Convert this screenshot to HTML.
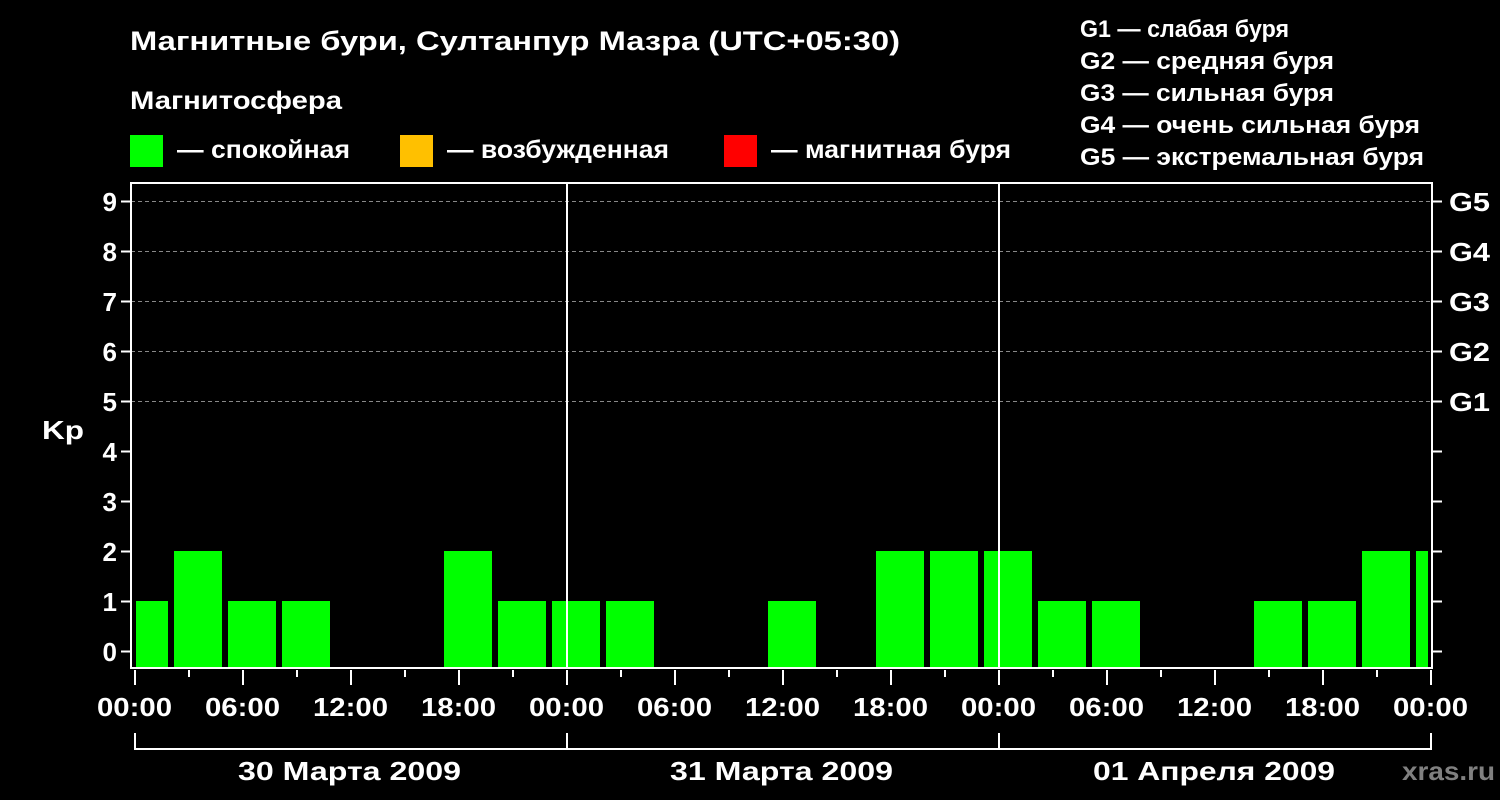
<!DOCTYPE html>
<html><head><meta charset="utf-8"><style>
html,body{margin:0;padding:0;background:#000;width:1500px;height:800px;overflow:hidden}
svg{display:block}
text{font-family:"Liberation Sans",sans-serif;font-weight:bold;fill:#fff}
</style></head><body>
<svg width="1500" height="800" viewBox="0 0 1500 800">
<text x="130" y="50" font-size="27" textLength="770" lengthAdjust="spacingAndGlyphs">Магнитные бури, Султанпур Мазра (UTC+05:30)</text>
<text x="130" y="109" font-size="25" textLength="212" lengthAdjust="spacingAndGlyphs">Магнитосфера</text>
<rect x="130" y="135" width="33" height="32" fill="#00ff00"/>
<text x="177" y="158" font-size="25" textLength="173" lengthAdjust="spacingAndGlyphs">— спокойная</text>
<rect x="400" y="135" width="33" height="32" fill="#ffc000"/>
<text x="447" y="158" font-size="25" textLength="222" lengthAdjust="spacingAndGlyphs">— возбужденная</text>
<rect x="724" y="135" width="33" height="32" fill="#ff0000"/>
<text x="771" y="158" font-size="25" textLength="240" lengthAdjust="spacingAndGlyphs">— магнитная буря</text>
<g font-size="24">
<text x="1080" y="37" textLength="209" lengthAdjust="spacingAndGlyphs">G1 — слабая буря</text>
<text x="1080" y="69" textLength="254" lengthAdjust="spacingAndGlyphs">G2 — средняя буря</text>
<text x="1080" y="101" textLength="254" lengthAdjust="spacingAndGlyphs">G3 — сильная буря</text>
<text x="1080" y="133" textLength="340" lengthAdjust="spacingAndGlyphs">G4 — очень сильная буря</text>
<text x="1080" y="165" textLength="344" lengthAdjust="spacingAndGlyphs">G5 — экстремальная буря</text>
</g>
<g stroke="#888" stroke-width="1" stroke-dasharray="4,3">
<line x1="131" x2="1432" y1="201.5" y2="201.5"/>
<line x1="131" x2="1432" y1="251.5" y2="251.5"/>
<line x1="131" x2="1432" y1="301.5" y2="301.5"/>
<line x1="131" x2="1432" y1="351.5" y2="351.5"/>
<line x1="131" x2="1432" y1="401.5" y2="401.5"/>
</g>
<g fill="#00ff00">
<rect x="136" y="601" width="32" height="67"/>
<rect x="174" y="551" width="48" height="117"/>
<rect x="228" y="601" width="48" height="67"/>
<rect x="282" y="601" width="48" height="67"/>
<rect x="444" y="551" width="48" height="117"/>
<rect x="498" y="601" width="48" height="67"/>
<rect x="552" y="601" width="48" height="67"/>
<rect x="606" y="601" width="48" height="67"/>
<rect x="768" y="601" width="48" height="67"/>
<rect x="876" y="551" width="48" height="117"/>
<rect x="930" y="551" width="48" height="117"/>
<rect x="984" y="551" width="48" height="117"/>
<rect x="1038" y="601" width="48" height="67"/>
<rect x="1092" y="601" width="48" height="67"/>
<rect x="1254" y="601" width="48" height="67"/>
<rect x="1308" y="601" width="48" height="67"/>
<rect x="1362" y="551" width="48" height="117"/>
<rect x="1416" y="551" width="12" height="117"/>
</g>
<g stroke="#fff" stroke-width="2" fill="none">
<rect x="131" y="183" width="1301" height="485"/>
<line x1="567" x2="567" y1="183" y2="668"/>
<line x1="999" x2="999" y1="183" y2="668"/>
<path d="M121 201.5h10M121 251.5h10M121 301.5h10M121 351.5h10M121 401.5h10M121 451.5h10M121 501.5h10M121 551.5h10M121 601.5h10M121 651.5h10"/>
<path d="M1432 201.5h10M1432 251.5h10M1432 301.5h10M1432 351.5h10M1432 401.5h10M1432 451.5h10M1432 501.5h10M1432 551.5h10M1432 601.5h10M1432 651.5h10"/>
<path d="M135 670v15M189 670v7M243 670v15M297 670v7M351 670v15M405 670v7M459 670v15M513 670v7M567 670v15M621 670v7M675 670v15M729 670v7M783 670v15M837 670v7M891 670v15M945 670v7M999 670v15M1053 670v7M1107 670v15M1161 670v7M1215 670v15M1269 670v7M1323 670v15M1377 670v7M1431 670v15"/>
<path d="M135 733v16H1431V733M567 733v16M999 733v16"/>
</g>
<g font-size="26" text-anchor="end">
<text x="117" y="211">9</text><text x="117" y="261">8</text><text x="117" y="311">7</text><text x="117" y="361">6</text><text x="117" y="411">5</text><text x="117" y="461">4</text><text x="117" y="511">3</text><text x="117" y="561">2</text><text x="117" y="611">1</text><text x="117" y="661">0</text>
</g>
<text x="42" y="439" font-size="26" textLength="42" lengthAdjust="spacingAndGlyphs">Kp</text>
<g font-size="26">
<text x="1449" y="211" textLength="41" lengthAdjust="spacingAndGlyphs">G5</text><text x="1449" y="261" textLength="41" lengthAdjust="spacingAndGlyphs">G4</text><text x="1449" y="311" textLength="41" lengthAdjust="spacingAndGlyphs">G3</text><text x="1449" y="361" textLength="41" lengthAdjust="spacingAndGlyphs">G2</text><text x="1449" y="411" textLength="41" lengthAdjust="spacingAndGlyphs">G1</text>
</g>
<g font-size="26">
<text x="97" y="716" textLength="75" lengthAdjust="spacingAndGlyphs">00:00</text><text x="205" y="716" textLength="75" lengthAdjust="spacingAndGlyphs">06:00</text><text x="313" y="716" textLength="75" lengthAdjust="spacingAndGlyphs">12:00</text><text x="421" y="716" textLength="75" lengthAdjust="spacingAndGlyphs">18:00</text>
<text x="529" y="716" textLength="75" lengthAdjust="spacingAndGlyphs">00:00</text><text x="637" y="716" textLength="75" lengthAdjust="spacingAndGlyphs">06:00</text><text x="745" y="716" textLength="75" lengthAdjust="spacingAndGlyphs">12:00</text><text x="853" y="716" textLength="75" lengthAdjust="spacingAndGlyphs">18:00</text>
<text x="961" y="716" textLength="75" lengthAdjust="spacingAndGlyphs">00:00</text><text x="1069" y="716" textLength="75" lengthAdjust="spacingAndGlyphs">06:00</text><text x="1177" y="716" textLength="75" lengthAdjust="spacingAndGlyphs">12:00</text><text x="1285" y="716" textLength="75" lengthAdjust="spacingAndGlyphs">18:00</text>
<text x="1393" y="716" textLength="75" lengthAdjust="spacingAndGlyphs">00:00</text>
<text x="238" y="780" textLength="223" lengthAdjust="spacingAndGlyphs">30 Марта 2009</text>
<text x="670" y="780" textLength="223" lengthAdjust="spacingAndGlyphs">31 Марта 2009</text>
<text x="1093" y="780" textLength="242" lengthAdjust="spacingAndGlyphs">01 Апреля 2009</text>
</g>
<text x="1402" y="780" font-size="26" textLength="93" lengthAdjust="spacingAndGlyphs" style="fill:#808080">xras.ru</text>
</svg>
</body></html>
